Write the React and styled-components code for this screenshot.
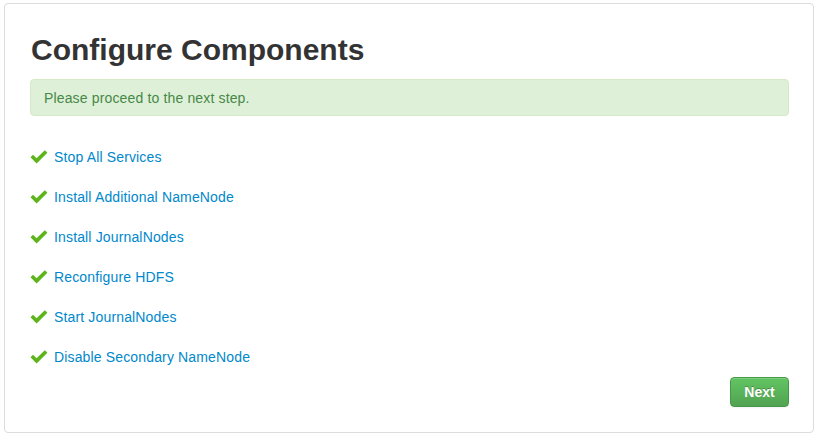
import React from "react";
import styled, { createGlobalStyle } from "styled-components";

const Global = createGlobalStyle`
  html, body { margin: 0; padding: 0; background: #fff; }
  body { font-family: "Liberation Sans", Arial, sans-serif; }
`;

const Panel = styled.div`
  box-sizing: border-box;
  width: 810px;
  height: 430px;
  margin: 3px 0 0 4px;
  border: 1px solid #dcdcdc;
  border-radius: 4px;
  padding: 0 24px 0 25px;
  display: flex;
  flex-direction: column;
`;

const Title = styled.h2`
  margin: 26px 0 0 1px;
  font-size: 30px;
  line-height: 40px;
  font-weight: bold;
  color: #333;
`;

const Alert = styled.div`
  margin-top: 9px;
  height: 37px;
  box-sizing: border-box;
  background: #dff0d8;
  border: 1px solid #d6e9c6;
  border-radius: 4px;
  color: #468847;
  font-size: 14px;
  letter-spacing: 0.15px;
  padding: 0 13px;
  display: flex;
  align-items: center;
`;

const Steps = styled.ul`
  list-style: none;
  margin: 31px 0 0;
  padding: 0;
  display: flex;
  flex-direction: column;
  gap: 20px;
`;

const Step = styled.li`
  display: flex;
  align-items: center;
  height: 20px;
  gap: 6px;
  font-size: 14px;
  letter-spacing: 0.15px;
  color: #0088cc;
`;

const Footer = styled.div`
  display: flex;
  justify-content: flex-end;
  margin-top: 10px;
`;

const Button = styled.button`
  width: 59px;
  height: 30px;
  box-sizing: border-box;
  border: 1px solid #48984a;
  border-radius: 4px;
  background: linear-gradient(#62c462, #51a351);
  color: #fff;
  font-family: "Liberation Sans", Arial, sans-serif;
  font-size: 14px;
  font-weight: bold;
  text-shadow: 0 -1px 0 rgba(0, 0, 0, 0.25);
  box-shadow: inset 0 1px 0 rgba(255, 255, 255, 0.2), 0 1px 2px rgba(0, 0, 0, 0.05);
  padding: 0;
  cursor: pointer;
`;

const Check = () => (
  <svg width="18" height="14" viewBox="0 0 18 14">
    <path d="M0.5 7.2 L3 4.8 L6.6 8.3 L14.8 0.3 L17.4 2.8 L6.6 13.4 Z" fill="#5cb518" />
  </svg>
);

const steps = [
  "Stop All Services",
  "Install Additional NameNode",
  "Install JournalNodes",
  "Reconfigure HDFS",
  "Start JournalNodes",
  "Disable Secondary NameNode",
];

export default function App() {
  return (
    <>
      <Global />
      <Panel>
        <Title>Configure Components</Title>
        <Alert>Please proceed to the next step.</Alert>
        <Steps>
          {steps.map((s) => (
            <Step key={s}>
              <Check />
              <span>{s}</span>
            </Step>
          ))}
        </Steps>
        <Footer>
          <Button>Next</Button>
        </Footer>
      </Panel>
    </>
  );
}
